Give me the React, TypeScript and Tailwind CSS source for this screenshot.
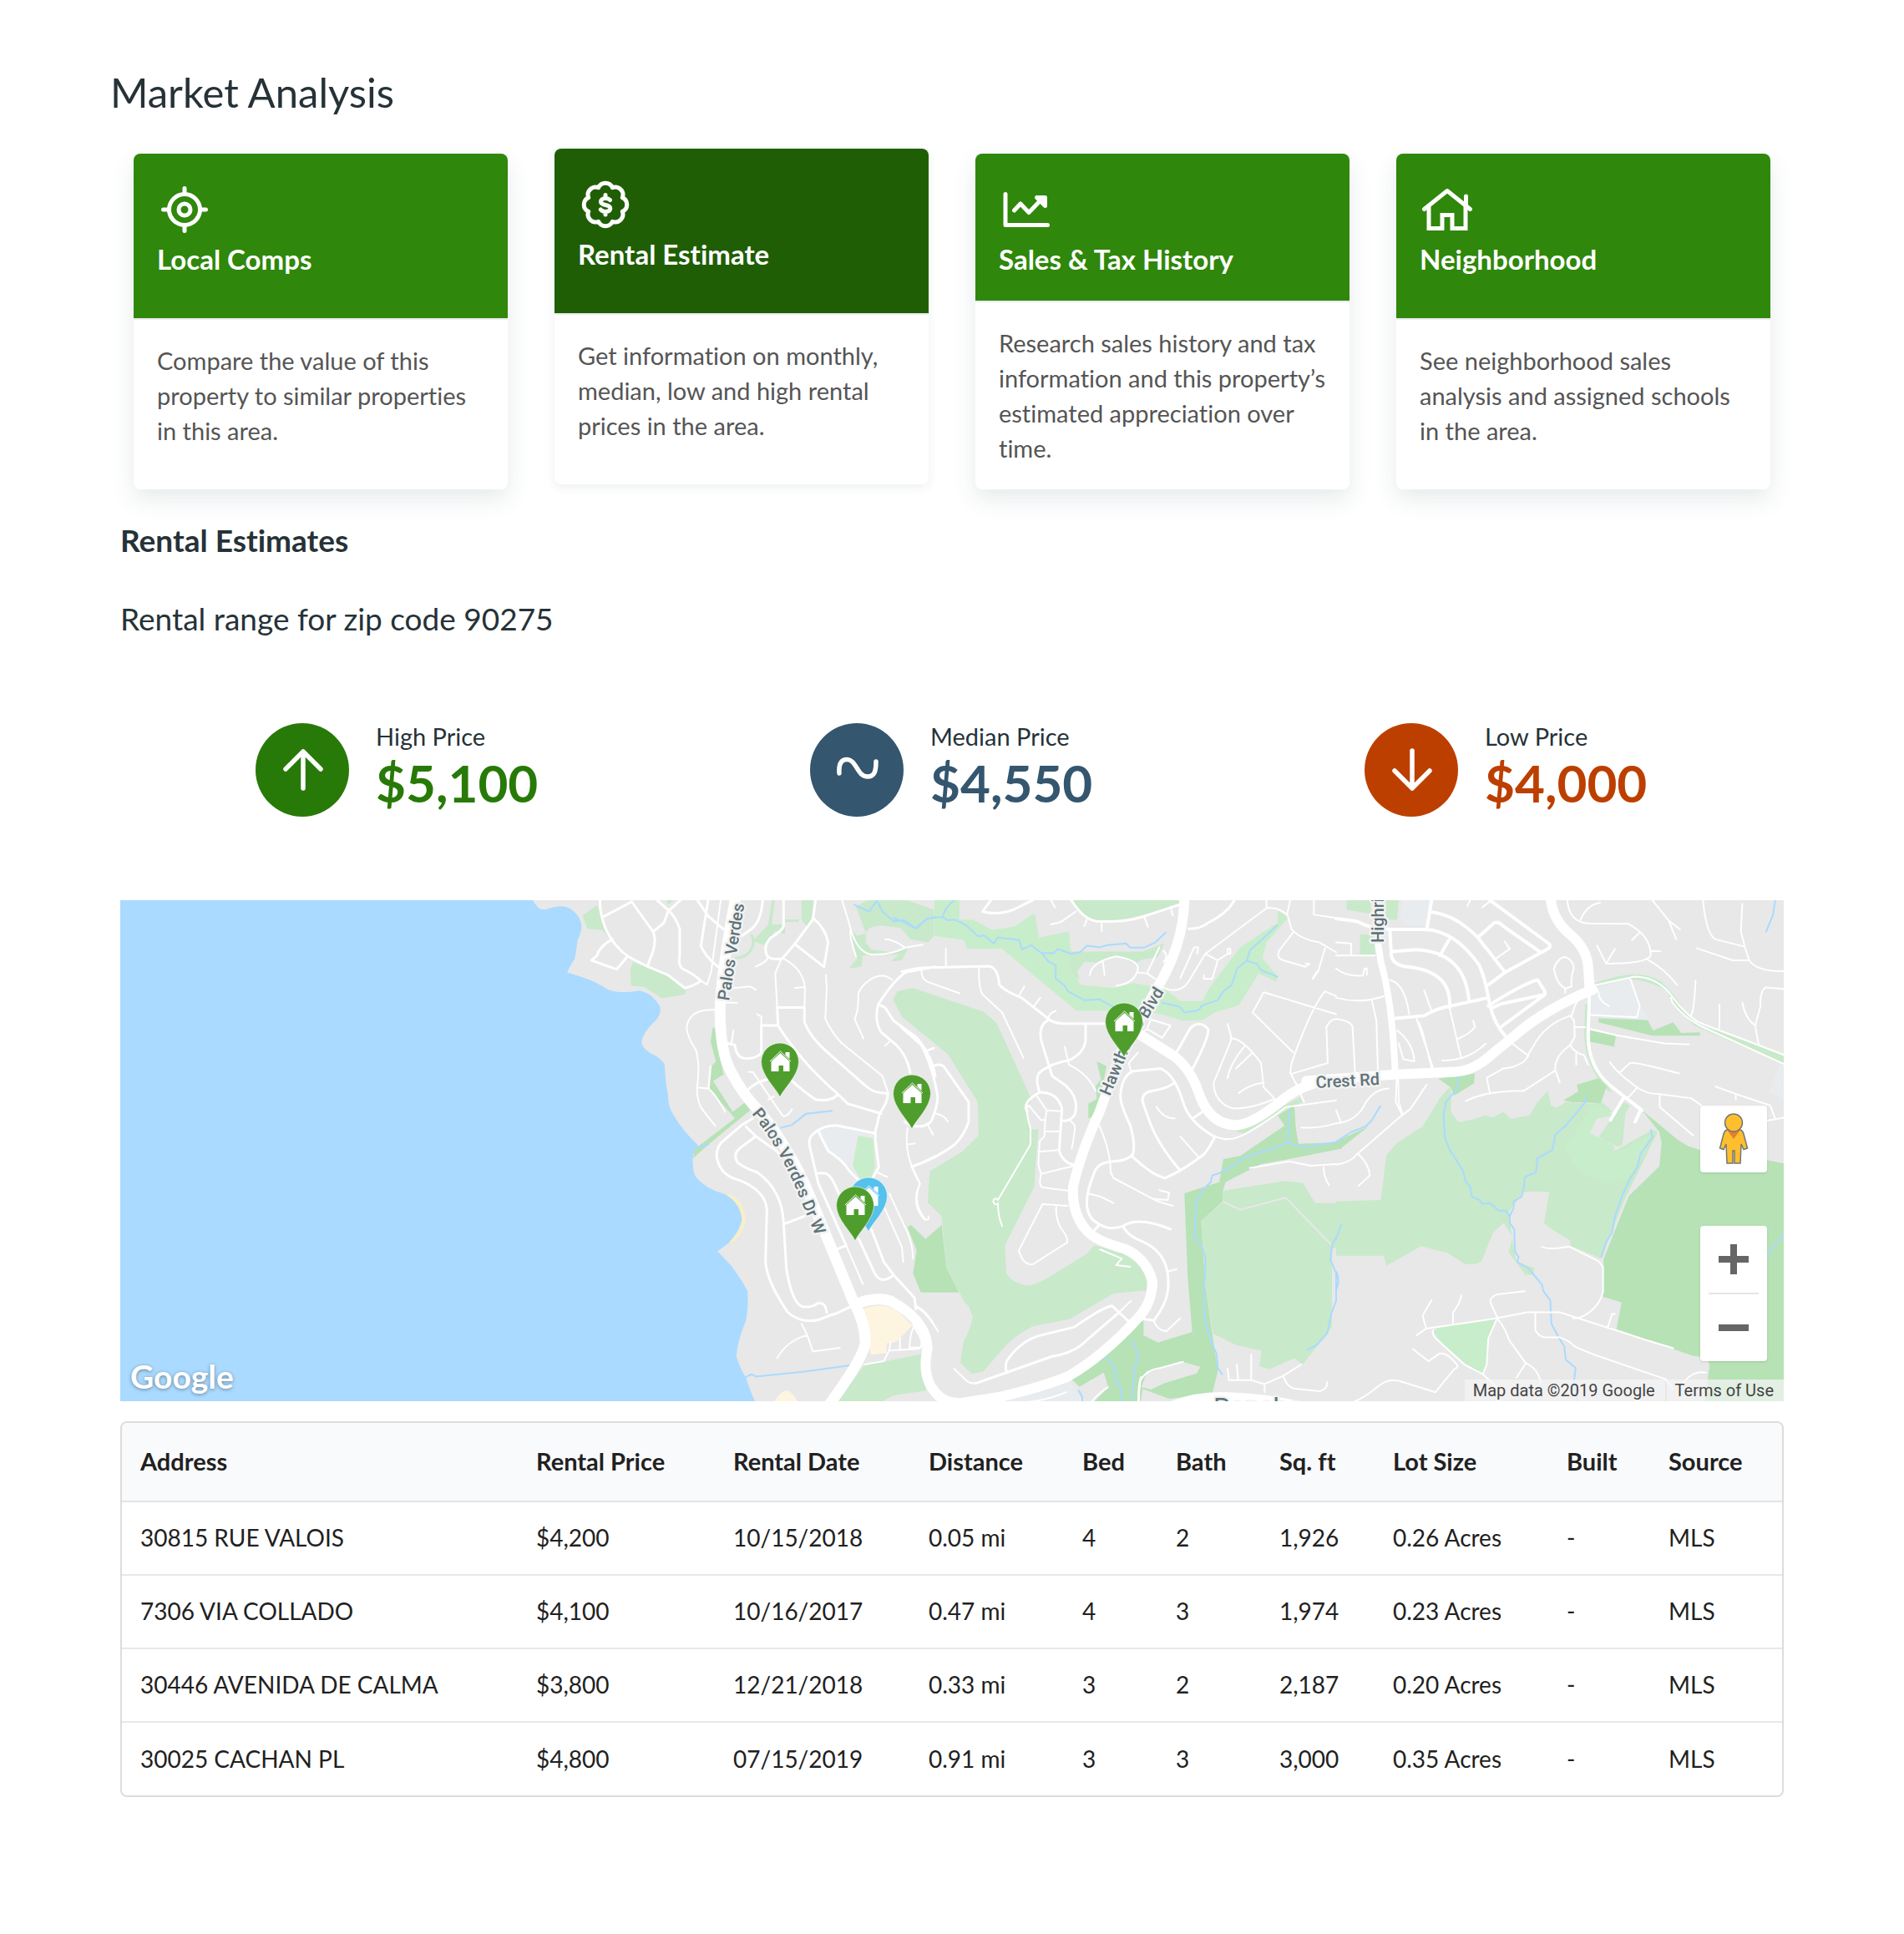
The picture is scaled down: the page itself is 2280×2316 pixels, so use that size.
import { useState } from "react";

const cards = [
  {
    title: "Local Comps",
    text: "Compare the value of this property to similar properties in this area.",
    icon: "target",
  },
  {
    title: "Rental Estimate",
    text: "Get information on monthly, median, low and high rental prices in the area.",
    icon: "dollar",
  },
  {
    title: "Sales & Tax History",
    text: "Research sales history and tax information and this property’s estimated appreciation over time.",
    icon: "chart",
  },
  {
    title: "Neighborhood",
    text: "See neighborhood sales analysis and assigned schools in the area.",
    icon: "house",
  },
];

const prices = [
  { label: "High Price", value: "$5,100", bg: "bg-[#287a08]", color: "text-[#287a08]", path: "M57 34V78M36 55L57 34L78 55" },
  { label: "Median Price", value: "$4,550", bg: "bg-[#34566f]", color: "text-[#34566f]", path: "M35 60C34 48 38 43.5 44 43.5C56 43.5 56 64 69 64C77 64 79 58 79 46" },
  { label: "Low Price", value: "$4,000", bg: "bg-[#bd3f00]", color: "text-[#bd3f00]", path: "M57 33V77M36 57L57 78L78 57" },
];

const columns = [
  { name: "Address", width: "w-[474px]" },
  { name: "Rental Price", width: "w-[236px]" },
  { name: "Rental Date", width: "w-[234px]" },
  { name: "Distance", width: "w-[184px]" },
  { name: "Bed", width: "w-[112px]" },
  { name: "Bath", width: "w-[124px]" },
  { name: "Sq. ft", width: "w-[136px]" },
  { name: "Lot Size", width: "w-[208px]" },
  { name: "Built", width: "w-[122px]" },
  { name: "Source", width: "w-[158px]" },
];

const rentals = [
  ["30815 RUE VALOIS", "$4,200", "10/15/2018", "0.05 mi", "4", "2", "1,926", "0.26 Acres", "-", "MLS"],
  ["7306 VIA COLLADO", "$4,100", "10/16/2017", "0.47 mi", "4", "3", "1,974", "0.23 Acres", "-", "MLS"],
  ["30446 AVENIDA DE CALMA", "$3,800", "12/21/2018", "0.33 mi", "3", "2", "2,187", "0.20 Acres", "-", "MLS"],
  ["30025 CACHAN PL", "$4,800", "07/15/2019", "0.91 mi", "3", "3", "3,000", "0.35 Acres", "-", "MLS"],
];

function CardIcon({ name }: { name: string }) {
  return (
    <svg viewBox="0 0 64 64" className="h-16 w-16" fill="none" stroke="currentColor" strokeWidth="5" strokeLinecap="round" strokeLinejoin="round" aria-hidden="true">
      {name === "target" && (
        <>
          <circle cx="33" cy="31" r="18.5" />
          <circle cx="33" cy="31" r="7" />
          <path d="M33 5.5V12M33 50V56.500M7.500 31H14M52 31H58.500" />
        </>
      )}
      {name === "dollar" && (
        <>
          <path d="M53.300 22.600A9.200 9.200 0 0 1 53.300 39.400A9.200 9.200 0 0 1 41.400 51.300A9.200 9.200 0 0 1 24.600 51.300A9.200 9.200 0 0 1 12.700 39.400A9.200 9.200 0 0 1 12.700 22.600A9.200 9.200 0 0 1 24.600 10.700A9.200 9.200 0 0 1 41.400 10.700A9.200 9.200 0 0 1 53.300 22.600Z" />
          <path d="M38.500 25.500C37 24 35 23.600 33 23.600C29.500 23.600 27.500 25.300 27.500 27.500C27.500 33 38.800 30 38.800 35.500C38.800 38 36.500 39.400 33 39.400C30.500 39.400 28.500 38.500 27.300 37M33 19.500V23M33 40V43" />
        </>
      )}
      {name === "chart" && (
        <>
          <path d="M8 12.500V49.500H58.500M18.500 32L26 24L36 34.500L50 20" />
          <path d="M45.500 16.500H55.500V26.500Z" fill="currentColor" />
        </>
      )}
      {name === "house" && (
        <>
          <path d="M5.500 30.500L33 8.500L60.500 30.500" />
          <path d="M11 28V53.500H27V37.500H39V53.500H55V28M55.500 15V26" strokeLinejoin="miter" />
        </>
      )}
    </svg>
  );
}

// Base layer of the map: ocean, parks and schools
function MapAreas() {
  return (
    <>
      <g transform="translate(456 -8) scale(.33333 .39032)">
        <path fill="#aadaff" d="M-1400 0H100L113 21L135 45Q150 52 170 47Q215 32 245 45Q290 70 289 105Q285 128 275 142Q270 175 265 200Q245 225 238 242L290 256Q340 270 385 295Q430 308 495 298Q545 305 572 350Q575 370 555 390Q505 430 505 460Q515 485 560 500Q590 520 588 530Q590 580 600 620Q598 650 620 680Q650 725 707 772L690 800Q685 850 700 870Q740 910 805 922Q850 940 866 975Q872 1020 820 1070L778 1098L825 1140Q860 1180 885 1218Q890 1270 880 1310Q850 1370 845 1420Q860 1460 880 1485Q895 1530 935 1600H-1400Z" />
        <path fill="#f9efc4" d="M805 922Q850 925 868 960Q885 1000 872 1025Q850 1060 835 1070L820 1070Q868 1030 866 1000Q860 950 805 922Z" />
        <path fill="#fdf5df" d="M1300 1275Q1380 1250 1430 1285L1478 1325L1420 1375L1385 1380V1410L1328 1415ZM960 1590Q1000 1525 1025 1525Q1050 1525 1085 1590Z" />
        <path fill="#e8ecef" d="M1145 730L1205 712L1340 737V750L1283 745L1265 835L1285 878L1250 835L1175 790Z" />
        <path fill="#c8edca" d="M1283 743L1337 752L1342 840L1330 872L1290 875L1263 835Z" />
        <path fill="#c8e9ca" d="M293 67L345 35L355 60L390 140L365 112L310 108ZM465 230L475 210L600 250L665 295L660 310L577 321L515 287L467 283ZM590 15H630L600 35ZM905 145L960 95H1020V125L985 115L945 158ZM1080 15H1122L1118 70L1100 102L1080 80ZM975 15H985L970 105L955 115ZM1275 40L1330 15H1440L1555 50V130L1535 150L1470 140L1435 105L1360 98L1325 105L1310 120ZM1250 105L1280 130L1310 122V150L1330 172L1400 180L1460 170L1440 205L1400 208L1430 187L1300 190L1295 225L1250 230L1280 200ZM1305 1447L1385 1435L1510 1413L1527 1525L1410 1540L1300 1590H1180Z" />
        <path fill="none" stroke="#c8e9ca" strokeWidth="3" vectorEffect="non-scaling-stroke" d="M898 125Q915 145 900 170Q880 200 840 198M1020 83H1070" />
        <path fill="#b6e2b6" d="M760 412H768Q775 470 800 555L762 575L832 670L878 640L895 665L745 770L690 812L695 785L710 775L840 690L750 600L757 530L772 515L753 455Z" />
      </g>
      <g transform="translate(936 -8) scale(.33333 .39032)">
        <path fill="#c8edca" d="M117 10H207V80H255L325 112L410 100L465 65H478L492 135L600 117L607 180L630 262L640 280L760 290L830 275L940 290L1000 330H1080L1100 295L1215 165L1350 90V52L1388 75L1310 150L1295 198L1350 255L1345 270L1282 245L1210 343L1125 365L1080 388L1010 390L930 370L860 360H628L360 170H235L222 142L117 130Z" />
        <path fill="#c8e9ca" d="M600 178H865L942 153L920 195L860 203L840 215L770 192L700 212L655 210L630 238L640 268L607 235ZM605 10Q650 80 700 84Q800 90 995 30V10Z" />
        <path fill="#c8e9ca" d="M-32 325L-15 300L40 290L295 363L340 397L465 630L448 670L462 725L490 723L475 900L370 1080L375 1165Q400 1200 460 1203Q510 1190 560 1160L665 1105L690 1080L830 1105Q880 1150 880 1217L760 1227L605 1305L470 1328Q400 1360 370 1390L292 1467L252 1474L210 1440L222 1372Q240 1350 255 1300L240 1265L228 1258L160 1150L143 990L93 948L100 852L215 793L275 743L273 640L165 493L0 378Z" />
        <path fill="#b6e2b6" d="M20 1023L33 1017L85 1060L143 1017L160 1150L205 1224H68L40 1165L53 1095ZM700 515L735 530L700 680L670 690V645L700 630L697 590L715 570ZM1350 680L1410 650L1415 720L1425 768L1580 763V783L1390 815L1290 830L1163 885L1153 912V945L1075 1005L1090 1200L1115 1350L1135 1465L1115 1535L960 1550L865 1520L850 1490L835 1480Q860 1420 900 1412L955 1405L1040 1380L1072 1450L1065 1470L940 1505L865 1520L850 1600H640L740 1515L725 1470L640 1515L600 1483L720 1420L830 1325L868 1310V1355L920 1378L1043 1345L1027 1180L1015 920L1140 885L1155 815L1215 805L1375 712Z" />
        <path fill="#c8e9ca" d="M1153 912L1375 882L1440 888L1485 950H1580V1080L1545 1090V1330L1440 1445L1410 1425L1320 1460L1285 1450L1292 1403L1200 1385L1118 1350L1090 1200L1075 1005L1153 948ZM1200 730L1375 650L1430 625L1440 640L1350 672L1230 735Z" />
        <path fill="none" stroke="#e8e8e8" strokeWidth="2" vectorEffect="non-scaling-stroke" d="M1153 945L1215 970L1378 933L1545 1080" />
        <path fill="#e8e8e8" d="M635 1515L725 1470L742 1515L690 1560H650ZM860 1515L880 1470L1000 1435L1072 1452L1060 1472L940 1503L895 1522Z" />
        <path fill="#e8ecef" d="M390 1545L600 1486L650 1560V1600H250Z" />
      </g>
      <g transform="translate(1456 -8) scale(.35714 .39032)">
        <path fill="#c8e9ca" d="M35 15H115V62L35 50ZM165 15H210L205 80H165ZM80 125L130 128V190H55L80 185ZM0 945L150 940L168 803L205 765L290 715L350 625L385 590V670L410 702L465 692L500 680L525 687L560 670L585 692L650 680L675 640L710 605L720 650L740 657L770 640L860 645L890 640L925 668L865 690L850 735L935 790L1060 725L1080 730L1060 765L975 925L890 1120L785 1080V1065L715 1025L697 1010L715 915H630L580 975L590 1060L605 1130L665 1150L660 1170H635L578 1100L592 1055L562 1010L525 1042L487 1130L465 1137H432L375 1103L285 1082L168 1142L160 1111H0Z" />
        <path fill="#c8edca" d="M860 645L915 665L925 682L875 690L850 735L930 772L935 797L1070 733L980 878L900 885L825 860L765 790ZM325 1345L345 1330L540 1303L510 1365L505 1445L492 1475L430 1440L360 1385Z" />
        <path fill="#c8e9ca" d="M965 640L985 650L970 675L960 770L945 777L880 748L920 695ZM870 275Q1010 225 1090 270L1130 310L1185 380L1210 400L1501 493V523L1200 405L1130 340L1110 300Q1000 235 870 285ZM835 340L832 430Q835 530 910 605L925 610L850 500L845 340Z" />
        <path fill="#b6e2b6" d="M1025 665L1145 755L1180 775L1230 790L1445 818L1520 832V1600H1230L1252 1450L1245 1425L1195 1418L940 1337L957 1255L893 1236L897 1120L980 925L1083 835L1090 765L1078 725ZM880 383L1045 388L1062 420L1130 395L1157 428L1220 426V436H1060L880 395ZM852 420L938 437L932 470L852 455ZM343 568L465 552L462 583L395 620L385 595ZM762 635L812 607L807 587L880 567L907 592L887 643L790 640ZM0 760L108 715L18 780L0 783Z" />
        <path fill="#e8ecef" d="M862 295L985 258L1020 345L1047 388L855 375ZM222 15H318L302 100L235 98L215 75ZM1485 528H1520V640L1452 610Z" />
        <path fill="none" stroke="#e8e8e8" strokeWidth="3" vectorEffect="non-scaling-stroke" d="M1078 728L1087 765L1080 835L978 926L890 1125" />
      </g>
    </>
  );
}

const streams = {
  west: "M1005 719L1045 710L1095 676L1188 667M705 778L745 770M880 1483L900 1475L915 1482L1090 1467L1258 1447M1270 35L1322 55L1350 22L1370 55L1410 85L1450 82L1490 108L1530 78L1560 72",
  center: "M-30 75L0 85L50 107L90 77L145 72L165 82L190 80L230 97L275 132L295 128L330 153L345 135L420 142L432 172L465 158L500 182L545 183L560 170L607 185L640 180L665 160L710 165L740 158L805 153L820 166L870 166L910 150L948 120M147 72Q155 40 190 20M505 185L525 208L553 220L552 260L585 283L597 300L655 327L710 325L760 348M935 335L1000 348L1015 365L1065 358L1080 343L1135 327L1155 300L1185 280L1205 230L1240 205L1250 175L1348 98M1240 207L1275 215L1290 235L1348 255M1393 665L1385 765L1340 780L1270 798L1225 812L1200 830L1150 855L1115 865L1110 885L1085 905L1057 945L1052 1055L1075 1080L1090 1115V1155L1085 1210L1087 1300L1100 1345L1115 1385L1130 1410L1135 1455L1150 1475M1385 765L1450 778L1560 763M828 1370L850 1420L835 1460L825 1580M732 1420L768 1460L770 1500L790 1520V1580M636 1525L648 1545V1590M1560 1055L1545 1080L1540 1125L1560 1165V1250L1542 1290L1528 1350L1490 1385L1458 1400",
  east: "M410 565L405 600L368 640L360 680L365 750L380 785L425 850L435 885L450 900L455 930L480 940L490 952L515 950L545 973H568L582 990L595 965V945L622 930L630 900L632 870L670 855L675 812L725 787L735 740L770 712L790 690L835 640V625M582 990V1010L597 1030L600 1100L612 1115L607 1130L645 1150L690 1200L695 1220L718 1248L722 1320L745 1360L765 1390L770 1430L803 1455L797 1500L812 1570M1055 725L1060 747L1020 800L1010 840L985 875L960 925L935 990L925 1040L905 1070L890 1115M148 652L120 695L100 714L50 732L0 762M18 1015L0 1060M0 1160Q15 1185 0 1215M1472 21L1465 65L1442 117M1501 1045L1445 1110",
};

const roads = {
  west: {
    major: "M845 0Q790 250 787 350Q785 480 825 545Q870 620 930 670Q1050 800 1110 930L1265 1250Q1310 1320 1308 1380Q1300 1430 1160 1590M1270 1262Q1340 1235 1400 1250",
    medium: "M1195 1292L1270 1262M355 15Q355 110 425 170Q450 195 530 225L600 250L660 290Q690 285 718 268Q690 245 650 230Q635 215 642 190V110Q630 75 600 50L560 20M370 70L470 25L490 50L545 115Q560 140 545 180L527 220M545 118L585 90L600 55L645 20M345 190L325 205L415 233L455 192M345 190Q350 165 400 140M940 20Q935 80 905 105L865 130M745 15L718 160Q730 190 780 225M705 20L745 70L800 110M1015 20V100Q1010 115 970 135Q940 160 955 190Q970 205 1010 200L1055 155L1120 80L1130 20M1120 75Q1165 105 1175 150L1160 225L1055 155M992 350H1090V395Q1110 440 1170 485L1310 590Q1340 615 1390 613Q1390 640 1360 675L1345 730V760L1357 840L1330 880M992 350L995 405L935 405V490Q910 510 870 505Q845 500 840 465L815 460M995 405Q1080 520 1210 615L1245 645L1365 675M1210 615Q1190 640 1130 632Q1090 610 1045 575M890 600Q910 580 970 567M1560 225L1460 240Q1420 255 1355 340Q1340 390 1365 425L1420 465Q1460 500 1470 550M1355 340L1380 350L1410 390L1490 440Q1545 490 1560 560M1340 735L1210 712Q1160 710 1125 735Q1100 750 1110 780L1140 890L1240 1080M1140 730L1175 790Q1230 820 1250 850L1285 880M905 690L865 710L790 765Q765 795 780 825Q795 865 850 878Q950 910 955 970L950 1130Q955 1190 1030 1285Q1080 1320 1140 1308L1195 1290M880 715L915 745L860 780Q830 800 850 825Q870 840 920 855Q1010 910 1015 1010L1025 1150Q1045 1260 1085 1268Q1120 1270 1135 1258Q1165 1250 1170 1285M915 745L990 790L1010 810M1020 1013L1090 990M1140 858H1165Q1185 865 1200 895L1250 990M1285 1060L1345 1170Q1370 1200 1410 1170M1330 1030L1375 1130L1410 1170L1485 1240L1490 1275M1210 1090L1240 1080",
    minor: "M790 15L755 240L740 280L720 268M765 357Q670 355 667 415Q670 440 700 480Q715 520 705 590Q700 640 730 670L770 713M705 595L745 598L752 530M745 598Q770 615 805 670M810 335H848M835 290L895 285L915 295M835 420L828 458M920 370L935 378V405M890 547L905 548L1010 680Q1025 690 1045 662M960 632L980 622M1005 205L985 245L992 350M1015 200Q1085 230 1092 290L1090 350M1055 290L1090 287M915 224Q955 210 960 195M1167 250L1170 290L1165 385Q1190 430 1225 460L1370 560L1390 610M1225 20L1250 90Q1275 180 1330 187Q1400 190 1455 165L1515 157M1380 140Q1410 140 1450 165M1255 110Q1250 130 1275 193M1405 265Q1370 240 1325 265Q1290 285 1283 310Q1285 360 1270 385L1302 445M1380 467L1395 455M1525 483L1555 473M1460 720Q1450 790 1478 840L1560 805M1478 840L1505 890Q1475 950 1525 1000M1462 770L1487 767M1350 855L1388 870M1395 920L1460 1040Q1480 1080 1480 1120M1375 960L1440 1085L1445 1130M1240 1080L1300 1198M1080 1320L1100 1355Q1030 1370 992 1425M1100 1355L1120 1405L1217 1394M1305 1445L1375 1435L1395 1400L1400 1375M1395 1402L1500 1397Q1520 1390 1505 1360L1480 1325M1480 1335Q1470 1350 1467 1395M1433 1365V1398M1490 1265Q1530 1280 1560 1330",
  },
  center: {
    major: "M-40 1250Q90 1310 92 1395Q75 1460 100 1505Q140 1570 220 1562L350 1545Q520 1510 600 1480Q720 1420 840 1310Q900 1260 900 1190Q880 1120 800 1090Q690 1065 660 1030Q610 980 615 900Q640 800 710 670L790 480L910 300Q1020 150 1014 0M850 430L980 500Q1040 540 1070 620Q1110 710 1200 710Q1260 710 1380 625Q1450 580 1560 570M910 1600Q1010 1545 1150 1545Q1350 1550 1500 1590",
    medium: "M0 240Q60 225 130 227L310 223Q345 225 350 280Q370 300 430 320L530 387Q550 400 590 399H730M290 55L320 20M290 55Q340 68 400 50L470 20M605 15Q650 80 700 85Q800 90 870 70L995 35M1030 108Q1070 110 1100 90Q1170 60 1195 20M0 412L70 465Q110 530 128 620Q130 650 105 700Q60 730 10 700M110 530Q135 520 150 530L240 640V700Q225 740 190 770Q120 815 35 838M530 387Q490 400 500 450L540 560L590 590Q640 630 620 680Q600 700 580 697M660 402V450Q655 490 600 512Q540 520 500 545Q475 560 495 610Q560 610 575 660L565 790Q580 830 625 833M495 610Q430 640 450 670M830 545Q790 560 785 620Q785 650 820 710Q840 770 830 800Q810 820 760 822Q700 825 690 860Q660 920 665 960Q670 1000 710 1015Q750 1035 795 1020Q850 990 965 1030M830 545L930 537Q980 555 1010 640Q1030 700 1120 745M980 580Q950 600 900 605Q860 610 865 640L890 700Q920 770 1000 850M1045 690L1080 670M825 805Q900 865 945 873Q1010 850 1085 800Q1105 780 1125 745M985 490L1035 415Q1065 385 1100 415Q1105 440 1040 545M795 1022Q810 1050 870 1070Q970 1110 955 1220Q950 1260 905 1310L865 1305L830 1325L755 1265Q720 1270 620 1330L500 1355Q430 1370 380 1430Q370 1440 375 1468M780 1285L665 1370Q620 1410 540 1420L375 1470L265 1503M710 1015L680 1045M850 1580Q850 1500 860 1485",
    minor: "M158 170V222M70 235Q70 265 95 272L207 306M277 228Q275 290 290 310L360 365L437 505M423 310L440 285M475 345L497 320M525 385Q530 365 553 360M535 95L570 88L625 55M655 100L665 80M718 115V92M870 70L884 102M965 40L973 67M535 20L550 42M675 250Q680 210 770 193Q850 205 848 230Q840 275 770 283M722 210L728 250M845 242L880 245L925 165M940 175Q960 195 940 210M940 290Q1000 310 1030 270L1090 185L1310 45Q1350 40 1385 65L1400 110Q1430 140 1500 150L1560 180M880 245L935 275M1310 20V45M1395 20L1385 60M1480 20V65L1560 75M1405 120L1355 175Q1345 200 1370 205L1450 225L1465 215L1450 215M1520 168L1495 240L1475 262L1490 240M1560 315L1520 300Q1470 350 1400 520L1395 550L1420 590M1405 487L1260 365L1300 303L1560 370M1400 553L1530 520L1525 410Q1540 385 1560 385M1170 400L1185 445Q1150 520 1120 580Q1120 640 1190 660Q1260 660 1340 630M1180 445Q1220 440 1290 520L1300 595L1340 630M1230 470Q1180 520 1170 567M1258 490Q1220 520 1200 537M1210 612Q1250 585 1300 580M880 415L935 443L965 405L900 388M865 425L880 415L895 385M585 470L600 525Q670 555 695 605M848 488L815 520L825 550M455 650Q440 660 462 720V770Q400 860 345 940M345 940Q330 930 328 945Q335 960 345 950Q345 990 360 1020M455 650L500 695H515L520 665L575 668M480 615L520 665M515 695L512 745L495 760L490 830L500 860L620 835M515 730H565M490 792L562 787M500 860Q490 895 505 902L600 912M595 958L505 953L420 1095Q435 1140 470 1138L595 1070Q595 1050 570 1025Q550 990 555 960M610 782Q625 720 620 710L605 697M708 710Q750 790 750 855L760 873L920 945L973 958M925 910L960 918L955 940L905 937M665 920L715 930L760 950M915 655Q940 690 980 690M1000 745L1065 808M1165 752Q1210 765 1380 655L1560 635M1120 745L1165 755M1445 640L1415 580M1435 718Q1500 722 1560 705M1250 842L1390 822L1470 835L1560 830M1515 840Q1515 870 1535 895M953 1160L987 1153M905 1310Q915 1340 950 1343L1000 1303M780 1285L823 1250M187 1458L235 1497Q260 1510 300 1492L375 1470M35 838Q50 870 65 890Q30 950 80 1000Q100 1005 95 990M92 483L115 475M120 675Q155 680 165 700M92 708L112 740M30 1393H70L72 1350M50 1270Q80 1275 130 1343M712 1092L790 1120L770 1140L820 1145M1170 1458L1175 1493H1255L1303 1505V1530M1203 1445L1208 1490M1255 1415V1490M1303 1505L1370 1480L1435 1445M1370 1480Q1385 1520 1420 1520L1500 1527Q1530 1520 1528 1498M860 1490Q880 1460 930 1455L1010 1437M680 1560Q710 1530 740 1515M450 1560Q520 1555 590 1530M1000 260L1050 165H1065L1060 185M1135 205L1115 262H1085V250M1090 185L1135 205L1170 185V170H1180V185H1168",
  },
  east: {
    major: "M-100 575L200 555L400 547Q460 545 520 495L600 435Q700 355 860 295M718 0Q720 80 790 130Q840 170 845 225L850 295",
    ridge: "M140 15V150L150 210Q190 340 198 555",
    medium: "M850 300L845 420Q840 530 920 590L1025 665M175 110H300Q400 115 480 220Q500 260 515 340Q530 400 570 440M180 110L185 190Q190 220 240 225Q390 240 380 350M185 178L270 172Q430 180 445 325M200 383L295 375Q340 350 385 345L508 320M320 57Q400 65 475 135L565 240M515 20L715 155Q720 165 710 170L565 243L510 280M475 135L530 90Q545 85 560 100L685 180M348 190L378 143M320 20L305 105M525 350L555 338L700 310L700 300L675 265Q620 280 510 345M555 408L700 310M0 77L70 85Q100 100 125 103L180 110M965 625L920 695M1020 665L1003 700",
    minor: "M0 190L130 190M0 320Q80 340 160 315M0 385Q50 390 55 410L63 545M120 330L135 390L140 545M0 150L50 153V190M0 230Q30 255 90 252L95 230H103V250M180 265Q230 275 245 370M205 420Q260 460 262 515L225 508L210 460M270 385L325 535M278 395L290 425L320 535M295 297L320 360M380 350L418 500M355 512Q440 515 502 460M405 447Q450 430 465 410L460 390M565 147L582 170L538 198M590 460L645 498L630 515Q600 535 560 537L505 565L515 610M435 637Q500 605 630 605L735 543L750 580M735 543Q730 500 785 465L800 440L798 390L785 375Q700 400 660 470L640 500M785 465Q800 490 830 495L845 525M805 490V525M800 410H835M790 375L800 345L812 325M768 305V290Q740 280 730 230Q745 195 770 195Q795 205 797 230Q785 260 790 285L768 292M775 20Q780 90 850 92L980 93Q1055 130 1055 190Q1040 215 905 215L875 160M820 80Q840 35 885 28M905 215L935 170M992 143L1018 120M1055 177H1087M1040 200Q1100 230 1143 280M1060 20L1115 83L1140 140M1115 83L1153 110M440 38L450 20M490 42L515 25M1230 20Q1240 120 1270 140L1370 163L1385 205Q1410 240 1501 238M1210 168L1330 205L1385 205M1362 32L1357 115L1370 163M865 282L1000 255Q1080 255 1130 320Q1170 370 1215 395L1501 495M1122 320L1128 335Q1170 385 1230 410L1501 523M1205 268Q1200 370 1187 378M1285 340V420M1501 293L1440 288Q1420 300 1423 345L1405 405L1417 465M1362 335Q1375 390 1407 405M850 415L940 435L1100 460L1183 463M918 517Q940 550 1010 595Q1040 615 1080 615L1190 628L1225 650M950 550L985 520Q1000 515 1150 552M1008 597L975 630M1085 620V655L1197 742M1272 592L1340 615L1455 650L1472 690M1340 615V632M1445 697L1501 688M985 258L1018 345L1008 380L855 373M872 290L880 305Q880 330 915 345M0 705Q70 700 100 640Q130 600 175 598M0 665L15 700M0 832Q50 825 70 800L215 685L250 660L303 587M75 800Q110 830 113 865L75 897M203 560L200 640L222 680M208 560L210 640L222 675M690 1083Q710 1095 780 1083L880 1128L895 1145V1222Q880 1275 820 1300L795 1303M270 1355L302 1335L540 1303L640 1285H750L1040 1370L1130 1395M302 1335L290 1295L320 1247M392 1317V1285Q415 1260 420 1232M632 1220L540 1230Q510 1240 520 1260L545 1310Q565 1330 580 1370L635 1440Q680 1460 685 1500M605 1485L637 1440M668 1285V1340Q680 1360 700 1362H750Q780 1370 800 1390L865 1415L1105 1490L1130 1520M910 1333L925 1290H935M258 1398L310 1435L345 1412Q370 1405 405 1445Q410 1455 395 1460L333 1530L210 1495Q170 1485 130 1520Q90 1550 50 1563M540 1303L510 1365L505 1445L492 1475M325 1340Q320 1355 340 1370L430 1445L492 1475L545 1520M1150 1520Q1190 1460 1240 1470",
  },
};

function RoadPath({ d, width }: { d: string; width: number }) {
  return <path d={d} strokeWidth={width} vectorEffect="non-scaling-stroke" />;
}

function MapRoads() {
  return (
    <g fill="none" strokeLinecap="round" strokeLinejoin="round">
      <g stroke="#aadaff">
        <g transform="translate(456 -8) scale(.33333 .39032)"><RoadPath d={streams.west} width={2} /></g>
        <g transform="translate(936 -8) scale(.33333 .39032)"><RoadPath d={streams.center} width={2} /></g>
        <g transform="translate(1456 -8) scale(.35714 .39032)"><RoadPath d={streams.east} width={2} /></g>
      </g>
      <g stroke="#fff">
        <g transform="translate(456 -8) scale(.33333 .39032)">
          <RoadPath d={roads.west.minor} width={2} />
          <RoadPath d={roads.west.medium} width={3} />
          <RoadPath d={roads.west.major} width={13} />
        </g>
        <g transform="translate(936 -8) scale(.33333 .39032)">
          <RoadPath d={roads.center.minor} width={2} />
          <RoadPath d={roads.center.medium} width={3} />
          <RoadPath d={roads.center.major} width={12} />
        </g>
        <g transform="translate(1456 -8) scale(.35714 .39032)">
          <RoadPath d={roads.east.minor} width={2} />
          <RoadPath d={roads.east.medium} width={4} />
          <RoadPath d={roads.east.ridge} width={8} />
          <RoadPath d={roads.east.major} width={12} />
        </g>
      </g>
    </g>
  );
}

function Pin({ x, y, color }: { x: number; y: number; color: string }) {
  return (
    <g transform={`translate(${x} ${y})`}>
      <path d="M0 0C-4 -10 -22.500 -26 -22.500 -42.500A22.500 22.500 0 0 1 22.500 -42.500C22.500 -26 4 -10 0 0Z" fill={color} stroke="#fff" strokeOpacity=".6" />
      <path d="M-10.500 -31V-43L0.500 -53L11.500 -43V-31H4V-38H-1.500V-31ZM6.500 -54H11.500V-46L6.500 -50.500Z" fill="#fff" />
      <path d="M-12 -43L0.500 -55L13 -43" fill="none" stroke="#fff" />
    </g>
  );
}

function RentalMap() {
  return (
    <div className="relative mt-25 h-[600px] overflow-hidden bg-[#e8e8e8]">
      <svg viewBox="0 0 1992 600" preserveAspectRatio="xMidYMid slice" className="h-full w-full font-['Roboto',sans-serif]" role="img" aria-label="Map of rentals">
        <MapAreas />
        <MapRoads />
        <defs>
          <path id="west-road" d="M756 256Q787 292 811 350L840 420" />
          <path id="blvd" d="M1185 235L1207 182Q1215 162 1229 144L1256 100" />
        </defs>
        <g fill="#5f7378" stroke="#f2f2f2" strokeWidth="5" strokeLinejoin="round" paintOrder="stroke" fontSize="20" fontWeight="500">
          <text transform="translate(729 121) rotate(-81)">Palos Verdes</text>
          <text><textPath href="#west-road">Palos Verdes Dr W</textPath></text>
          <text><textPath href="#blvd">Hawthorne Blvd</textPath></text>
          <text transform="translate(1432 225) rotate(-3)">Crest Rd</text>
          <text transform="translate(1513 51) rotate(-90)">Highridge Rd</text>
          <text x="1309" y="618" fontSize="32" fontWeight="400">Rancho</text>
        </g>
        <Pin x={896} y={397} color="#55c1ec" />
        <Pin x={880} y={408} color="#4f9e2d" />
        <Pin x={790} y={236} color="#4f9e2d" />
        <Pin x={948} y={274} color="#4f9e2d" />
        <Pin x={1202} y={188} color="#4f9e2d" />
      </svg>

      <a href="#" className="absolute bottom-1.5 left-3 font-['Lato',sans-serif] text-[39px] leading-[48px] font-bold text-white [text-shadow:0_1px_4px_rgba(0,0,0,0.4)]">
        Google
      </a>

      {/* Map controls */}
      <div className="absolute right-5 bottom-12 flex w-20 flex-col gap-16">
        <button aria-label="Street View" className="flex h-20 items-center justify-center rounded bg-white shadow">
          <svg viewBox="0 0 36 62" className="h-[62px] w-9" fill="#fdbf2d" stroke="#757575" strokeWidth="1.5" aria-hidden="true">
            <path d="M10 20H26Q29 21 30 25L34.500 42L30 43.500L27 37L26 60H19V45H17V60H10L9 37L6 43.500L1.500 42L6 25Q7 21 10 20Z" />
            <path d="M10 20H26L18 31Z" fill="#e08030" stroke="none" />
            <circle cx="18" cy="11.500" r="10.500" />
          </svg>
        </button>
        <div className="flex flex-col items-center rounded bg-white shadow">
          <button aria-label="Zoom in" className="flex h-20 w-full items-center justify-center">
            <svg viewBox="0 0 36 36" className="h-9 w-9" stroke="#666" strokeWidth="8" aria-hidden="true">
              <path d="M0 18H36M18 0V36" />
            </svg>
          </button>
          <span className="h-0.5 w-[60px] bg-[#e6e6e6]" />
          <button aria-label="Zoom out" className="flex h-20 w-full items-center justify-center">
            <svg viewBox="0 0 36 36" className="h-9 w-9" stroke="#666" strokeWidth="8" aria-hidden="true">
              <path d="M0 18H36" />
            </svg>
          </button>
        </div>
      </div>

      <div className="absolute right-0 bottom-0 flex gap-0.5 font-['Roboto',sans-serif] text-xl leading-[26px] text-[#444]">
        <span className="bg-[#f5f5f5]/70 pr-3 pl-2.5">Map data ©2019 Google</span>
        <a href="#" className="bg-[#f5f5f5]/70 pr-3 pl-2.5">Terms of Use</a>
      </div>
    </div>
  );
}

export default function App() {
  const [active, setActive] = useState("Rental Estimate");

  return (
    <main className="min-h-screen bg-white px-[132px] pt-[74px] pb-40 font-['Lato',sans-serif] text-[#263238] [font-variant-ligatures:none]">
      <h1 className="text-[49px] leading-[72px]">Market Analysis</h1>

      <div className="mt-[38px] grid grid-cols-4 gap-14 px-7">
        {cards.map((card) => (
          <button
            key={card.title}
            onClick={() => setActive(card.title)}
            className={`flex flex-col overflow-hidden rounded-lg bg-white text-left ${
              active === card.title
                ? "-translate-y-1.5 shadow-[0_4px_12px_rgba(38,70,83,0.08)]"
                : "shadow-[0_12px_28px_rgba(38,70,83,0.11)]"
            }`}
          >
            <div
              className={`w-full flex-auto px-7 pt-9 pb-6.5 text-white ${
                active === card.title ? "bg-[#205e06]" : "bg-[#2f870b]"
              }`}
            >
              <CardIcon name={card.icon} />
              <h2 className="mt-0.5 text-[33px] leading-[48px] font-bold">{card.title}</h2>
            </div>
            <p className="w-full flex-auto border-t-2 border-[#ebebeb] py-7 pr-6 pl-7 text-[29px] leading-[42px] text-[#555]">
              {card.text}
            </p>
          </button>
        ))}
      </div>

      <section className="px-3">
        <h2 className="mt-[34px] text-[37px] leading-[54px] font-bold">Rental Estimates</h2>
        <p className="mt-10 text-[37px] leading-[54px]">Rental range for zip code 90275</p>

        <div className="mt-[98px] grid grid-cols-3">
          {prices.map((price) => (
            <div key={price.label} className="flex justify-center gap-8">
              <div className={`h-28 w-28 rounded-full ${price.bg}`}>
                <svg viewBox="0 0 112 112" fill="none" stroke="#fff" strokeWidth="5.500" strokeLinecap="round" strokeLinejoin="round" aria-hidden="true">
                  <path d={price.path} />
                </svg>
              </div>
              <div className="w-[196px]">
                <p className="text-[29px] leading-8">{price.label}</p>
                <p className={`mt-1.5 text-[62px] leading-[66px] font-bold ${price.color}`}>{price.value}</p>
              </div>
            </div>
          ))}
        </div>

        <RentalMap />

        <div className="mt-6 overflow-hidden rounded-lg border-2 border-[#dcdcdc]">
          <table className="w-full table-fixed text-left text-[28px] leading-[42px] text-[#212121]">
            <thead className="bg-[#f9fafc]">
              <tr className="h-[94px] border-b-2 border-[#e2e4e6]">
                {columns.map((column) => (
                  <th key={column.name} scope="col" className={`pb-0.5 pl-[22px] text-[29px] font-bold whitespace-nowrap ${column.width}`}>
                    {column.name}
                  </th>
                ))}
              </tr>
            </thead>
            <tbody>
              {rentals.map((rental) => (
                <tr key={rental[0]} className="h-22 border-b-2 border-[#e8e8e8] last:border-b-0">
                  {rental.map((value, index) => (
                    <td key={index} className="pb-0.5 pl-[22px] whitespace-nowrap">{value}</td>
                  ))}
                </tr>
              ))}
            </tbody>
          </table>
        </div>
      </section>
    </main>
  );
}
